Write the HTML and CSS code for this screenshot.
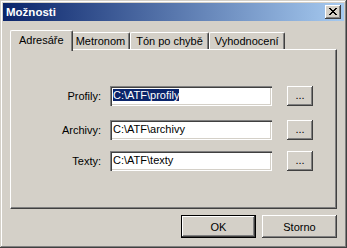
FILE: index.html
```html
<!DOCTYPE html>
<html lang="cs">
<head>
    <meta charset="UTF-8">
    <title>Možnosti</title>
    <link rel="stylesheet" href="styles.css">
</head>
<body>

    <div class="window">

        <!-- Title bar -->
        <div class="titlebar">
            <span class="title">Možnosti</span>
            <span class="close-btn">
                <svg width="8" height="7" viewBox="0 0 8 7" shape-rendering="crispEdges">
                    <path d="M0 0h2v1H0zM6 0h2v1H6zM1 1h2v1H1zM5 1h2v1H5zM2 2h4v1H2zM3 3h2v1H3zM2 4h4v1H2zM1 5h2v1H1zM5 5h2v1H5zM0 6h2v1H0zM6 6h2v1H6z" fill="#000"/>
                </svg>
            </span>
        </div>

        <div class="content">

            <!-- Tabs -->
            <div class="tabs">
                <div class="tab tab-active">Adresáře</div>
                <div class="tab">Metronom</div>
                <div class="tab">Tón po chybě</div>
                <div class="tab">Vyhodnocení</div>
            </div>

            <!-- Tab panel: Adresáře -->
            <div class="panel">
                <div class="row row-first">
                    <label class="label">Profily:</label>
                    <div class="field"><span class="selected">C:\ATF\profily</span></div>
                    <button class="btn btn-browse">...</button>
                </div>
                <div class="row row-second">
                    <label class="label">Archivy:</label>
                    <div class="field">C:\ATF\archivy</div>
                    <button class="btn btn-browse">...</button>
                </div>
                <div class="row">
                    <label class="label">Texty:</label>
                    <div class="field">C:\ATF\texty</div>
                    <button class="btn btn-browse">...</button>
                </div>
            </div>

            <!-- Dialog buttons -->
            <div class="actions">
                <button class="btn btn-dialog btn-default">OK</button>
                <button class="btn btn-dialog">Storno</button>
            </div>

        </div>
    </div>

</body>
</html>
```

FILE: styles.css
```css
body {
    margin: 0;
    padding: 0;
    font-family: "Liberation Sans", Arial, sans-serif;
    font-size: 11px;
    color: #000;
    background-color: #d4d0c8;
}

.window {
    width: 347px;
    height: 248px;
    box-sizing: border-box;
    padding: 3px;
    background-color: #d4d0c8;
    box-shadow: inset -1px -1px #404040, inset 1px 1px #d4d0c8,
                inset -2px -2px #808080, inset 2px 2px #fff;
}

.titlebar {
    height: 18px;
    display: flex;
    align-items: center;
    justify-content: space-between;
    padding: 0 3px 0 3px;
    background: linear-gradient(to right, #0a246a, #a6caf0);
}

.title {
    color: white;
    font-weight: bold;
    font-size: 11.5px;
}

.close-btn {
    width: 16px;
    height: 14px;
    display: flex;
    align-items: center;
    justify-content: center;
    background-color: #d4d0c8;
    box-sizing: border-box;
    padding: 0 1px 1px 0;
    box-shadow: inset -1px -1px #404040, inset 1px 1px #fff, inset -2px -2px #808080;
}

.content {
    padding: 9px 7px 0 7px;
}

/* Tabs */
.tabs {
    display: flex;
    align-items: flex-end;
    height: 19px;
    padding-left: 2px;
}

.tab {
    height: 17px;
    box-sizing: border-box;
    padding: 2px 4px 0 4px;
    border-top: 1px solid #fff;
    border-left: 1px solid #fff;
    border-right: 1px solid #404040;
    border-radius: 2px 2px 0 0;
    box-shadow: inset -1px 0 #808080;
    white-space: nowrap;
}

.tab:nth-child(3),
.tab:nth-child(4) {
    padding: 2px 5px 0 5px;
}

.tab-active {
    position: relative;
    z-index: 1;
    height: 21px;
    margin: 0 -2px -2px -2px;
    padding: 3px 8px 0 8px;
    background-color: #d4d0c8;
}

.tab-active + .tab {
    border-left: none;
    padding-left: 5px;
}

/* Panel */
.panel {
    height: 160px;
    box-sizing: border-box;
    padding-top: 36px;
    border-top: 1px solid #fff;
    border-left: 1px solid #fff;
    border-right: 1px solid #404040;
    border-bottom: 1px solid #404040;
    box-shadow: inset -1px -1px #808080;
}

.row {
    display: flex;
    align-items: center;
    height: 20px;
}

.row-first {
    margin-bottom: 14px;
}

.row-second {
    margin-bottom: 11px;
}

.label {
    width: 90px;
    text-align: right;
    margin-right: 9px;
}

.field {
    width: 162px;
    height: 20px;
    box-sizing: border-box;
    padding: 3px 0 0 3px;
    background-color: white;
    box-shadow: inset 1px 1px #808080, inset 2px 2px #404040,
                inset -1px -1px #fff, inset -2px -2px #d4d0c8;
    white-space: nowrap;
    overflow: hidden;
}

.selected {
    background-color: #0a246a;
    color: white;
}

/* Buttons */
.btn {
    font-family: inherit;
    font-size: 11px;
    color: #000;
    background-color: #d4d0c8;
    border: none;
    padding: 0;
    box-shadow: inset -1px -1px #404040, inset 1px 1px #fff, inset -2px -2px #808080;
}

.btn-browse {
    width: 26px;
    height: 20px;
    margin-left: 15px;
    padding-bottom: 2px;
}

.actions {
    display: flex;
    justify-content: flex-end;
    gap: 6px;
    margin-top: 6px;
}

.btn-dialog {
    width: 75px;
    height: 23px;
}

.btn-default {
    box-shadow: inset -1px -1px #000, inset 1px 1px #000,
                inset -2px -2px #404040, inset 2px 2px #fff, inset -3px -3px #808080;
}
```
